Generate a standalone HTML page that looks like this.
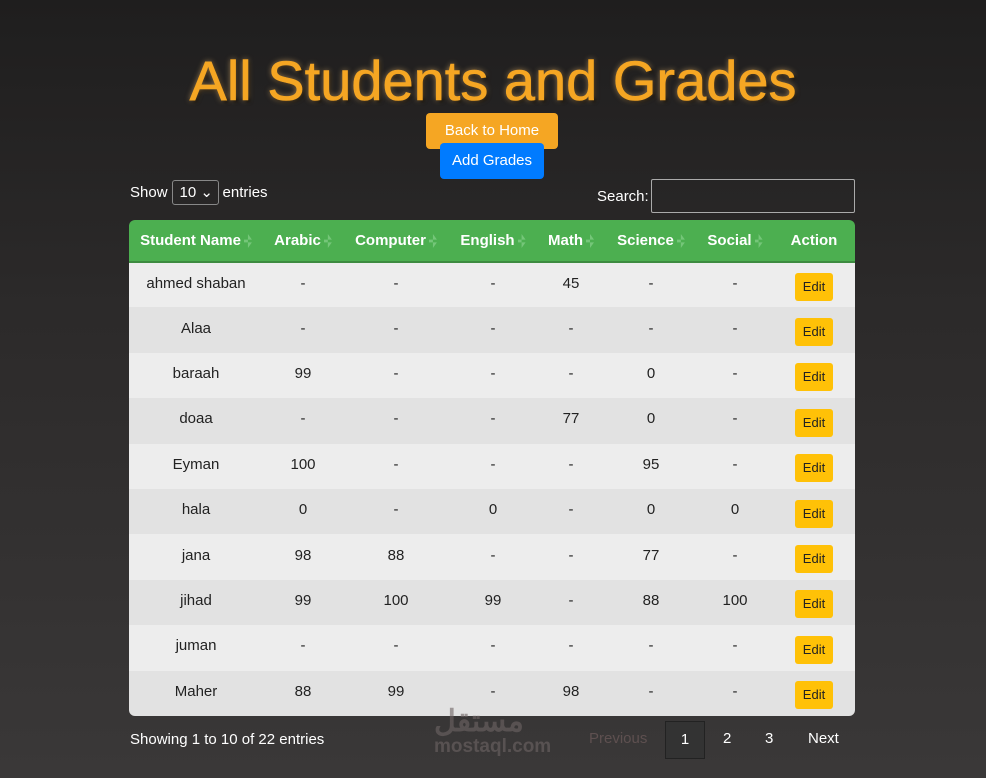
<!DOCTYPE html>
<html><head><meta charset="utf-8"><style>
*{box-sizing:border-box;margin:0;padding:0}
body{width:986px;height:778px;overflow:hidden;font-family:"Liberation Sans",sans-serif;background:linear-gradient(#1f1e1e,#2c2a2a 40%,#3a3838);position:relative;color:#fff}
h1{position:absolute;top:48px;left:0;width:986px;text-align:center;font-size:56px;font-weight:400;color:#f5a623;text-shadow:0 0 6px rgba(255,200,120,.6),2px 2px 3px #000;-webkit-text-stroke:0.6px #f5a623}
.b1{position:absolute;left:426px;top:113px;width:132px;height:36px;background:#f5a623;border-radius:4px;font-size:15px;text-align:center;line-height:36px}
.b2{position:absolute;left:440px;top:143px;width:104px;height:36px;background:#007bff;border-radius:4px;font-size:15px;text-align:center;line-height:36px}
.show{position:absolute;left:130px;top:180px;font-size:15px;display:flex;align-items:center;gap:4px}
.sel{width:47px;height:25px;border:1px solid #888;border-radius:3px;padding-left:7px;line-height:23px;font-size:15px}
.search{position:absolute;left:597px;top:179px;font-size:15px;display:flex;align-items:center;gap:2px}
.search div{width:204px;height:34px;border:1px solid #aaa;border-radius:2px}
table{position:absolute;left:129px;top:220px;width:726px;border-collapse:collapse;border-radius:6px;overflow:hidden;font-size:15px;color:#222}
th{background:#4caf50;color:#fff;height:42px;font-size:15px;border-bottom:2px solid #3d8b40;position:relative}
th i{display:inline-block;width:8px;height:14px;vertical-align:middle;margin-left:3px;background:#7fcc83;clip-path:polygon(50% 0,100% 40%,0 40%,0 60%,100% 60%,50% 100%);opacity:.8}
td{height:45.4px;text-align:center;padding-bottom:4px}
tr:nth-child(odd) td{background:#e2e2e2}
tr:nth-child(even) td{background:#ededed}
.e{display:inline-block;width:38px;height:28px;background:#ffc107;border-radius:3px;font-size:13px;line-height:28px;margin-top:8px}
.info{position:absolute;left:130px;top:731px;font-size:15px}
.pg{position:absolute;top:721px;font-size:15px;line-height:36px}
.wm{position:absolute;left:434px;top:708px;color:#6e6464;font-weight:bold;font-size:19px;opacity:.6}
</style></head><body>
<h1>All Students and Grades</h1>
<div class="b1">Back to Home</div>
<div class="b2">Add Grades</div>
<div class="show">Show <div class="sel">10 ⌄</div> entries</div>
<div class="search">Search: <div></div></div>
<table>
<tr><th style="width:134px">Student Name<i></i></th><th style="width:80px">Arabic<i></i></th><th style="width:106px">Computer<i></i></th><th style="width:88px">English<i></i></th><th style="width:68px">Math<i></i></th><th style="width:92px">Science<i></i></th><th style="width:76px">Social<i></i></th><th>Action</th></tr>
<tr><td>ahmed shaban</td><td>-</td><td>-</td><td>-</td><td>45</td><td>-</td><td>-</td><td><span class="e">Edit</span></td></tr>
<tr><td>Alaa</td><td>-</td><td>-</td><td>-</td><td>-</td><td>-</td><td>-</td><td><span class="e">Edit</span></td></tr>
<tr><td>baraah</td><td>99</td><td>-</td><td>-</td><td>-</td><td>0</td><td>-</td><td><span class="e">Edit</span></td></tr>
<tr><td>doaa</td><td>-</td><td>-</td><td>-</td><td>77</td><td>0</td><td>-</td><td><span class="e">Edit</span></td></tr>
<tr><td>Eyman</td><td>100</td><td>-</td><td>-</td><td>-</td><td>95</td><td>-</td><td><span class="e">Edit</span></td></tr>
<tr><td>hala</td><td>0</td><td>-</td><td>0</td><td>-</td><td>0</td><td>0</td><td><span class="e">Edit</span></td></tr>
<tr><td>jana</td><td>98</td><td>88</td><td>-</td><td>-</td><td>77</td><td>-</td><td><span class="e">Edit</span></td></tr>
<tr><td>jihad</td><td>99</td><td>100</td><td>99</td><td>-</td><td>88</td><td>100</td><td><span class="e">Edit</span></td></tr>
<tr><td>juman</td><td>-</td><td>-</td><td>-</td><td>-</td><td>-</td><td>-</td><td><span class="e">Edit</span></td></tr>
<tr><td>Maher</td><td>88</td><td>99</td><td>-</td><td>98</td><td>-</td><td>-</td><td><span class="e">Edit</span></td></tr>
</table>
<div class="info">Showing 1 to 10 of 22 entries</div>
<div class="wm"><div style="font-size:30px;line-height:28px">مستقل</div><div>mostaql.com</div></div>
<div class="pg" style="left:589px;color:#5e5050">Previous</div>
<div class="pg" style="left:665px;width:40px;height:38px;border:1px solid #222;background:#333;text-align:center">1</div>
<div class="pg" style="left:723px">2</div>
<div class="pg" style="left:765px">3</div>
<div class="pg" style="left:808px">Next</div>
</body></html>
